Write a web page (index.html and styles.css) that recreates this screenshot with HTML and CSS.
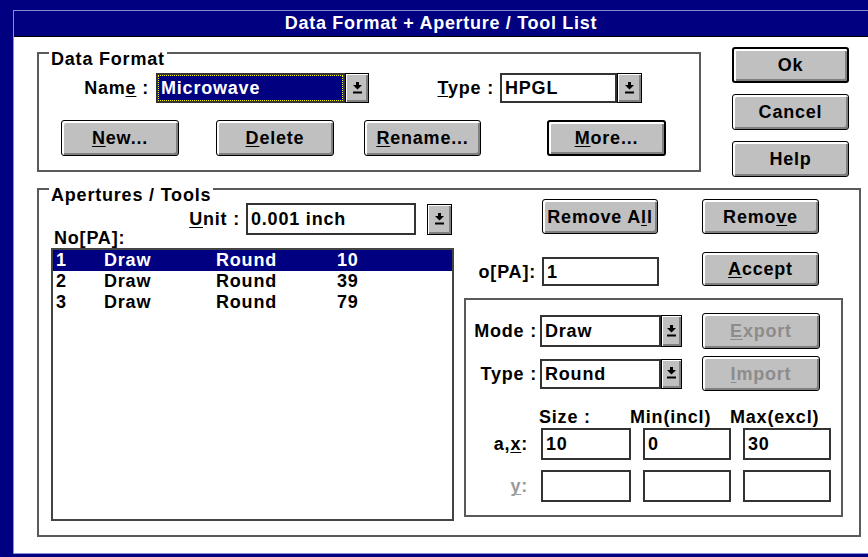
FILE: index.html
```html
<!DOCTYPE html>
<html>
<head>
<meta charset="utf-8">
<title>Data Format + Aperture / Tool List</title>
<link rel="stylesheet" href="styles.css">
</head>
<body>
<div class="window">
  <div class="frame">
    <div class="titlebar">Data Format + Aperture / Tool List</div>
    <div class="client">
      <div class="top-row">
        <section class="group group-format">
          <div class="group-title">Data Format</div>
          <div class="name-row">
            <span class="lbl lbl-name">Nam<u>e</u> :</span>
            <div class="combo combo-name">
              <div class="field selected"><span>Microwave</span></div>
              <span class="drop"><svg width="9" height="12" viewBox="0 0 9 12"><path d="M3 0h3v3h3L4.5 7.5 0 3h3z"/><rect y="9.5" width="9" height="2"/></svg></span>
            </div>
            <span class="lbl lbl-type"><u>T</u>ype :</span>
            <div class="combo combo-type">
              <div class="field"><span>HPGL</span></div>
              <span class="drop"><svg width="9" height="12" viewBox="0 0 9 12"><path d="M3 0h3v3h3L4.5 7.5 0 3h3z"/><rect y="9.5" width="9" height="2"/></svg></span>
            </div>
          </div>
          <div class="btn-row">
            <button class="btn b-new"><u>N</u>ew...</button>
            <button class="btn b-delete"><u>D</u>elete</button>
            <button class="btn b-rename"><u>R</u>ename...</button>
            <button class="btn default b-more"><u>M</u>ore...</button>
          </div>
        </section>
        <div class="side-buttons">
          <button class="btn default">Ok</button>
          <button class="btn">Cancel</button>
          <button class="btn">Help</button>
        </div>
      </div>

      <section class="group group-tools">
        <div class="group-title">Apertures / Tools</div>
        <div class="tools-body">
          <div class="tools-left">
            <div class="unit-row">
              <span class="lbl"><u>U</u>nit :</span>
              <div class="field unit-field"><span>0.001 inch</span></div>
              <span class="drop unit-drop"><svg width="9" height="12" viewBox="0 0 9 12"><path d="M3 0h3v3h3L4.5 7.5 0 3h3z"/><rect y="9.5" width="9" height="2"/></svg></span>
            </div>
            <div class="no-label">No[PA]:</div>
            <div class="listbox">
              <div class="list-row selected"><span>1</span><span>Draw</span><span>Round</span><span>10</span></div>
              <div class="list-row"><span>2</span><span>Draw</span><span>Round</span><span>39</span></div>
              <div class="list-row"><span>3</span><span>Draw</span><span>Round</span><span>79</span></div>
            </div>
          </div>

          <div class="tools-right">
            <div class="remove-row">
              <button class="btn b-remove-all">Remove A<u>l</u>l</button>
              <button class="btn b-remove">Remo<u>v</u>e</button>
            </div>
            <div class="pa-row">
              <div class="pa-pair">
                <span class="lbl pa-label">o[PA]:</span>
                <div class="field pa-field"><span>1</span></div>
              </div>
              <button class="btn b-accept"><u>A</u>ccept</button>
            </div>

            <div class="detail-box">
              <div class="detail-row mode-row">
                <span class="lbl detail-label">Mode :</span>
                <div class="combo combo-detail">
                  <div class="field"><span>Draw</span></div>
                  <span class="drop"><svg width="9" height="12" viewBox="0 0 9 12"><path d="M3 0h3v3h3L4.5 7.5 0 3h3z"/><rect y="9.5" width="9" height="2"/></svg></span>
                </div>
                <button class="btn disabled b-side"><u>E</u>xport</button>
              </div>
              <div class="detail-row type-row">
                <span class="lbl detail-label">Type :</span>
                <div class="combo combo-detail">
                  <div class="field"><span>Round</span></div>
                  <span class="drop"><svg width="9" height="12" viewBox="0 0 9 12"><path d="M3 0h3v3h3L4.5 7.5 0 3h3z"/><rect y="9.5" width="9" height="2"/></svg></span>
                </div>
                <button class="btn disabled b-side"><u>I</u>mport</button>
              </div>
              <div class="size-heads">
                <span class="h-size">Size :</span>
                <span class="h-min">Min(incl)</span>
                <span class="h-max">Max(excl)</span>
              </div>
              <div class="size-grid">
                <span class="lbl grid-label">a,<u>x</u>:</span>
                <div class="field"><span>10</span></div>
                <div class="field"><span>0</span></div>
                <div class="field"><span>30</span></div>
                <span class="lbl grid-label disabled-text"><u>y</u>:</span>
                <div class="field"></div>
                <div class="field"></div>
                <div class="field"></div>
              </div>
            </div>
          </div>
        </div>
      </section>
    </div>
  </div>
</div>
</body>
</html>
```

FILE: styles.css
```css
* { box-sizing: border-box; }

html, body {
  margin: 0;
  padding: 0;
}

body {
  width: 868px;
  height: 557px;
  overflow: hidden;
  background: #000080;
  color: #000;
  font-family: "Liberation Sans", Arial, sans-serif;
  font-weight: bold;
  font-size: 18px;
  line-height: 18px;
  letter-spacing: 0.8px;
}

u {
  text-decoration-thickness: 1px;
  text-underline-offset: 2px;
}

/* window frame */
.window {
  height: 557px;
  background: #000080;
  padding: 10px 0 3px 13px;
}

.frame {
  height: 544px;
  border-top: 1px solid #8a8ad6;
  border-left: 1px solid #8a8ad6;
  border-bottom: 1px solid #8a8ad6;
  display: flex;
  flex-direction: column;
}

.titlebar {
  height: 26px;
  flex: none;
  background: #000080;
  border-bottom: 1px solid #000;
  color: #fff;
  text-align: center;
  line-height: 25px;
  letter-spacing: 0.7px;
}

.client {
  flex: 1;
  background: #fff;
  padding: 10px 0 0 23px;
  display: flex;
  flex-direction: column;
}

/* group boxes */
.group {
  border: 2px solid #5a5a5a;
  flex: none;
}

.group-title {
  width: fit-content;
  height: 18px;
  margin: -4px 0 -14px 10px;
  padding: 0 2px;
  background: #fff;
}

.top-row {
  display: flex;
  align-items: flex-start;
}

.group-format {
  width: 664px;
  height: 120px;
  margin-top: 5px;
}

.lbl {
  white-space: nowrap;
}

/* text fields and combo boxes */
.field {
  background: #fff;
  border: 2px solid #333;
  padding-left: 3px;
  display: flex;
  align-items: center;
  white-space: nowrap;
  overflow: hidden;
}

.field.selected {
  background: #000080;
  color: #fff;
  outline: 1px dotted #ffff00;
  outline-offset: -3px;
}

.combo {
  display: flex;
  height: 30px;
}

.combo .field {
  flex: 1;
}

.drop {
  flex: none;
  background: #c0c0c0;
  border: 1px solid #000;
  box-shadow: inset 1px 1px 0 #fff, inset -2px -2px 0 #808080;
  display: flex;
  align-items: center;
  justify-content: center;
  padding-bottom: 1px;
}

.name-row {
  display: flex;
  align-items: center;
  height: 30px;
  margin-top: 19px;
}

.lbl-name {
  width: 117px;
  text-align: right;
  padding-right: 7px;
}

.combo-name { width: 213px; }
.combo-name .drop { width: 24px; }

.lbl-type {
  width: 131px;
  text-align: right;
  padding-right: 6px;
}

.combo-type { width: 142px; }
.combo-type .drop { width: 25px; }

/* push buttons */
.btn {
  font: inherit;
  letter-spacing: inherit;
  color: #000;
  height: 36px;
  padding: 0;
  background: #c0c0c0;
  border: 1px solid #000;
  border-radius: 3px;
  box-shadow: inset 2px 2px 0 #fff, inset -2px -2px 0 #808080;
  display: flex;
  align-items: center;
  justify-content: center;
  white-space: nowrap;
  flex: none;
}

.btn.default {
  border-width: 2px;
}

.btn.disabled {
  color: #8c8c8c;
}

.btn-row {
  display: flex;
  margin-top: 17px;
  padding-left: 22px;
}

.b-new { width: 118px; }
.b-delete { width: 118px; margin-left: 37px; }
.b-rename { width: 117px; margin-left: 30px; }
.b-more { width: 119px; margin-left: 66px; }

.side-buttons {
  margin-left: 31px;
  display: flex;
  flex-direction: column;
  gap: 11px;
}

.side-buttons .btn { width: 117px; }

/* apertures / tools */
.group-tools {
  width: 824px;
  height: 349px;
  margin-top: 11px;
}

.tools-body {
  display: flex;
}

.tools-left {
  width: 415px;
  padding-left: 12px;
  display: flex;
  flex-direction: column;
}

.unit-row {
  margin-top: 13px;
  height: 32px;
  display: flex;
  align-items: center;
  justify-content: flex-end;
  padding-right: 2px;
}

.unit-row .lbl { margin-right: 6px; }

.unit-field {
  width: 170px;
  height: 32px;
}

.unit-drop {
  width: 25px;
  height: 31px;
  margin-left: 11px;
}

.no-label {
  margin-top: -6px;
  height: 18px;
  padding-left: 3px;
}

.listbox {
  margin-top: 1px;
  width: 403px;
  height: 273px;
  border: 2px solid #444;
  background: #fff;
}

.list-row {
  display: grid;
  grid-template-columns: 48px 112px 121px auto;
  height: 21px;
  line-height: 21px;
  padding-left: 3px;
}

.list-row.selected {
  background: #000080;
  color: #fff;
}

.tools-right {
  flex: 1;
  margin-left: 8px;
  display: flex;
  flex-direction: column;
}

.remove-row {
  margin-top: 9px;
  display: flex;
  padding-left: 80px;
}

.remove-row .btn { height: 35px; }
.b-remove-all { width: 116px; }
.b-remove { width: 117px; margin-left: 44px; }

.pa-row {
  margin-top: 18px;
  height: 34px;
  display: flex;
  align-items: flex-end;
}

.pa-pair {
  display: flex;
  align-items: center;
}

.pa-label {
  width: 80px;
  text-align: right;
  padding-right: 6px;
}

.pa-field {
  width: 117px;
  height: 29px;
}

.b-accept {
  width: 117px;
  height: 34px;
  margin-left: 43px;
}

.detail-box {
  margin: 12px 0 0 2px;
  width: 379px;
  height: 219px;
  border: 2px solid #5a5a5a;
  display: flex;
  flex-direction: column;
}

.detail-row {
  display: flex;
  align-items: center;
}

.mode-row {
  margin-top: 13px;
  height: 36px;
}

.type-row {
  margin-top: 7px;
  height: 35px;
}

.detail-label {
  width: 74px;
  text-align: right;
  padding-right: 3px;
}

.combo-detail { width: 142px; }
.mode-row .combo-detail { height: 32px; }
.combo-detail .drop { width: 21px; }

.b-side {
  width: 118px;
  margin-left: 20px;
}

.mode-row .b-side { height: 36px; }
.type-row .b-side { height: 35px; }

.size-heads {
  margin-top: 17px;
  height: 18px;
  display: flex;
  padding-left: 73px;
  white-space: nowrap;
}

.h-size { width: 91px; }
.h-min { width: 100px; }

.size-grid {
  margin-top: 2px;
  display: grid;
  grid-template-columns: 63px 90px 88px 88px;
  grid-auto-rows: 32px;
  column-gap: 12px;
  row-gap: 10px;
}

.grid-label {
  align-self: center;
  text-align: right;
  padding-right: 1px;
}

.disabled-text {
  color: #9a9a9a;
}
```
